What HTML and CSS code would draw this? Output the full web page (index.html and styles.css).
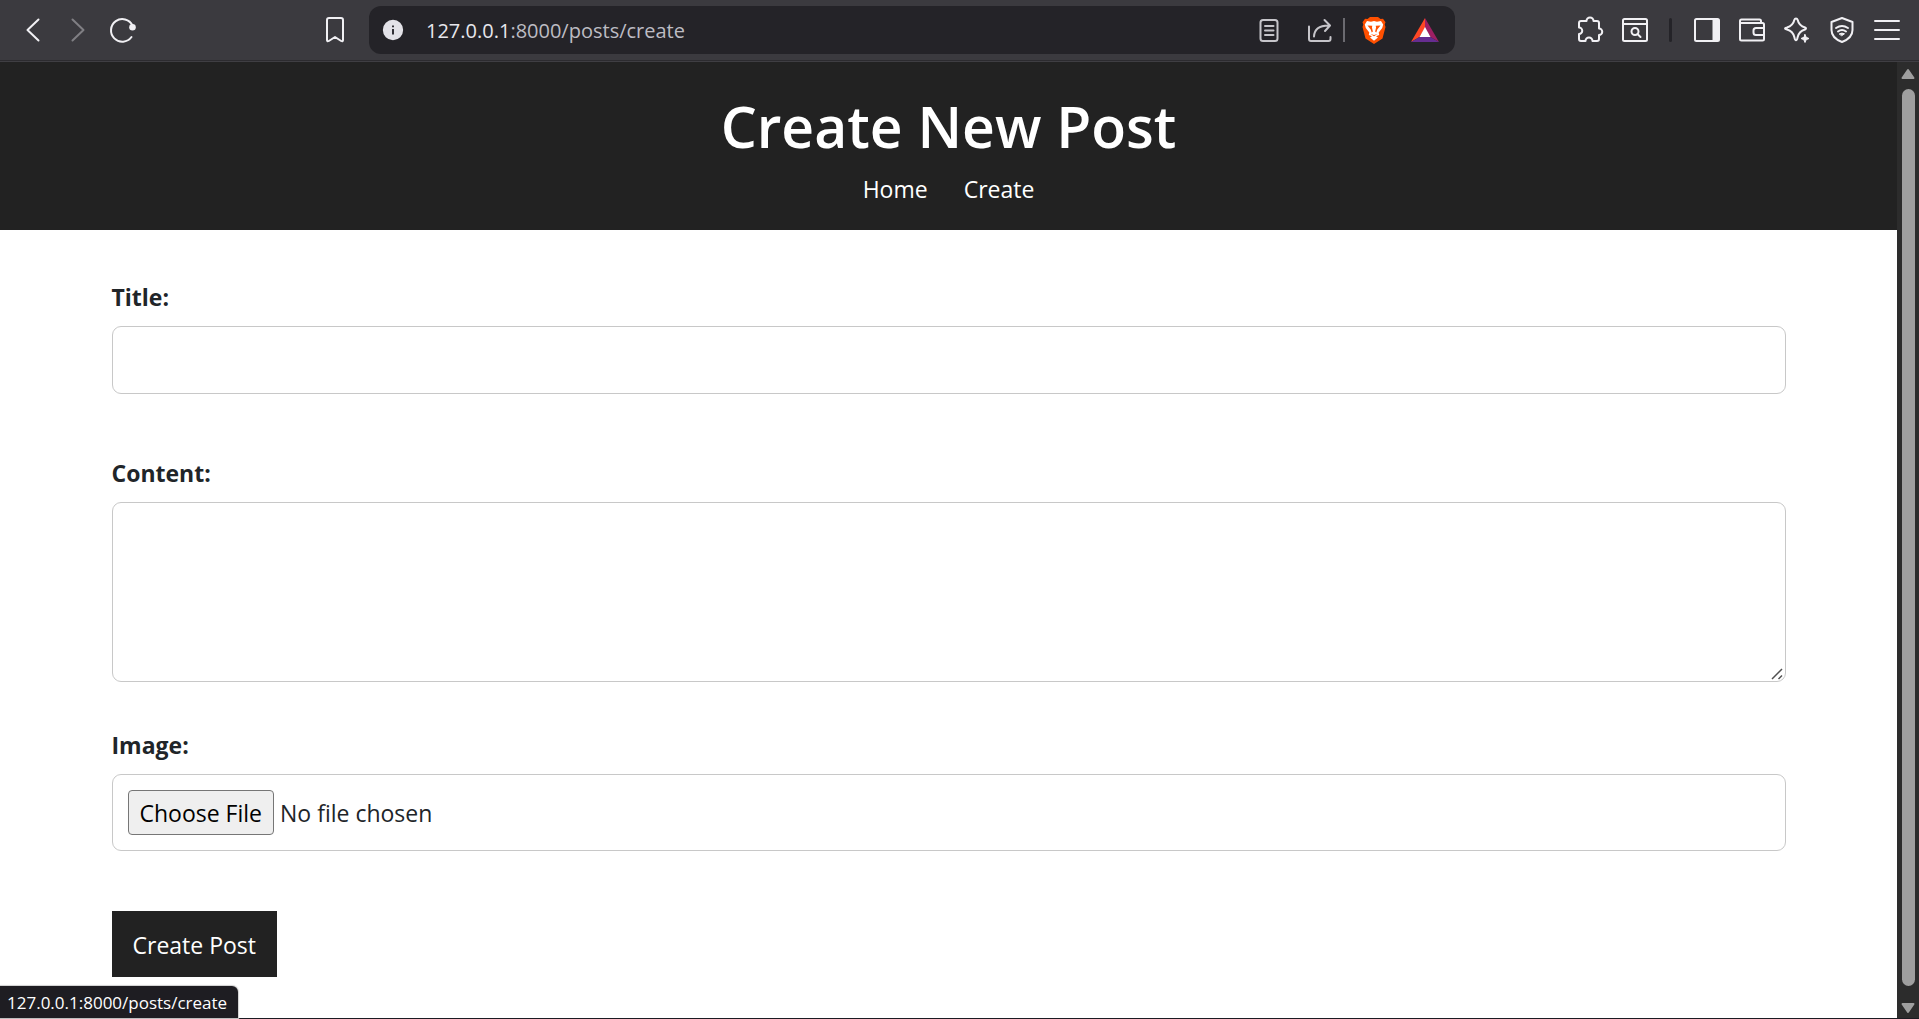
FILE: index.html
```html
<!DOCTYPE html>
<html lang="en">
<head>
<meta charset="utf-8">
<title>Create New Post</title>
<link rel="stylesheet" href="styles.css">
</head>
<body>
<div class="browser">
  <div class="toolbar">
    <div class="nav-tools">
      <button class="tool" aria-label="Back"><svg class="icon" viewBox="0 0 26 26"><path d="M18.5 2.5 7.5 13l11 10.5"/></svg></button>
      <button class="tool dim" aria-label="Forward"><svg class="icon" viewBox="0 0 26 26"><path d="M7.5 2.5 18.5 13l-11 10.5"/></svg></button>
      <button class="tool" aria-label="Reload"><svg class="icon" viewBox="0 0 26 26"><path d="M22.500 8.500A11.300 11.300 0 1 0 21.500 20"/><circle class="solid dot" cx="22.500" cy="10.300" r="3.300"/></svg></button>
      <button class="tool push" aria-label="Bookmark"><svg class="icon" viewBox="0 0 26 26"><path d="M5 3q0-2 2-2h12q2 0 2 2v20q0 2-1.800 1L13 20l-6.200 4q-1.800 1-1.800-1z"/></svg></button>
    </div>
    <div class="address">
      <button class="tool info" aria-label="Site information"><svg class="icon" viewBox="0 0 26 26"><circle class="solid" cx="13" cy="13" r="10"/><path class="mark" d="M13 12v6M13 8v2"/></svg></button>
      <span class="url"><span class="host">127.0.0.1</span>:8000/posts/create</span>
      <button class="tool soft" aria-label="Reader"><svg class="icon" viewBox="0 0 26 26"><rect x="4.500" y="3" width="17" height="21" rx="2.500"/><path d="M9 9h8.500M9 13.500h8.500M9 18h8.500"/></svg></button>
      <button class="tool soft" aria-label="Share"><svg class="icon" viewBox="0 0 26 26"><path d="M2 9.500V22q0 2 2 2h17.500q2 0 2-2v-2M7 19.500Q7.500 8.500 21.500 8.500M17.500 3 23 8.500l-5 5.500"/></svg></button>
      <span class="address-rule"></span>
      <button class="tool" aria-label="Brave Shields"><svg class="icon brand" viewBox="0 0 26 28"><path fill="#ff5000" d="M6.500 3 9 1h8l2.500 2 2.500-.2 2.500 3.500-.8 2.200.8 2.500-3 11.500-8.500 5.500L4.500 22.500 1.500 11l.8-2.500-.8-2.200L4 2.800z"/><path fill="#fff" d="m6 5 4 .7 3-.6 3 .6 4-.7 2.200 3.500-1 3.500-3.500 4.500.5 2.500-3.200 1.200 2 1.300-4 3.300L9 21.500l2-1.300L7.800 19l.5-2.500L4.800 12l-1-3.500z"/><path fill="#ff5000" d="m6.500 9.500 4.800.3-.4 1.600 1 4-1.200 1.200-1-3zM19.500 9.500l-4.800.3.4 1.600-1 4 1.200 1.200 1-3zM9.500 18l3.500 1 3.500-1-3.500 2.200z"/></svg></button>
      <button class="tool" aria-label="Brave Rewards"><svg class="icon brand" viewBox="0 0 28 26"><path fill="#ff4724" d="M14 1v10L8.500 20 0 25z"/><path fill="#9e1f63" d="M14 1v10l5.500 9 8.500 5z"/><path fill="#662d91" d="m0 25 8.500-5h11l8.500 5z"/><path fill="#fff" d="m14 10 5.500 10h-11z"/></svg></button>
    </div>
    <div class="menu-tools">
      <button class="tool" aria-label="Extensions"><svg class="icon" viewBox="0 0 26 26"><path d="M2 6q0-2 2-2h5.500a3.500 3.500 0 0 1 7 0H20q2 0 2 2v5.500a3 3 0 0 1 0 6.500v4q0 2-2 2h-4.500a3.500 3.500 0 0 0-7 0H4q-2 0-2-2v-5a3 3 0 0 0 0-6.500z"/></svg></button>
      <button class="tool" aria-label="Find in page"><svg class="icon" viewBox="0 0 26 26"><rect x="1" y="2" width="24" height="22" rx="1.500"/><path d="M1 7h24"/><circle cx="13" cy="14.500" r="3.500"/><path d="m15.500 17 3 3"/></svg></button>
      <span class="menu-rule"></span>
      <button class="tool" aria-label="Side panel"><svg class="icon" viewBox="0 0 26 26"><rect x="1" y="2" width="24" height="22" rx="1.500"/><path class="solid" d="M19.500 3H24v20h-4.500z"/></svg></button>
      <button class="tool" aria-label="Wallet"><svg class="icon" viewBox="0 0 26 26"><path d="M22 6V4q0-1.500-1.500-1.500h-18Q1 2.500 1 4v18q0 1.500 1.500 1.500h21q1.500 0 1.500-1.500V7.500Q25 6 23.500 6H1M25 11h-8q-2.500 0-2.500 2.500v2q0 2.500 2.500 2.500h8"/></svg></button>
      <button class="tool" aria-label="Assistant"><svg class="icon" viewBox="0 0 26 26"><path d="M12 1.500q1.200 0 1.600 1.300 1.400 6 7.400 7.700 2 1 0 2-6 1.700-7.400 7.700-.6 3-1.600 3t-1.600-3Q9 14.200 3 12.500q-4-1 0-2 6-1.700 7.400-7.700Q10.800 1.500 12 1.500z"/><path class="solid thin" d="m21 17.500 1.200 2.800 2.800 1.200-2.800 1.200L21 25.500l-1.200-2.800-2.800-1.200 2.800-1.200z"/></svg></button>
      <button class="tool" aria-label="VPN"><svg class="icon" viewBox="0 0 26 26"><path d="m13 1 10.500 4v8q0 8-10.500 12Q2.500 21 2.500 13V5zM7 11q6-4 12 0M9 14.500q4-3 8 0"/><path class="solid thin" d="M10.500 16.800q2.500-1.500 5 0L13 18.500z"/></svg></button>
      <button class="tool" aria-label="Menu"><svg class="icon" viewBox="0 0 26 26"><path d="M1 4h24M1 13h24M1 22h24"/></svg></button>
    </div>
  </div>

  <div class="viewport">
    <div class="page">
      <header class="banner">
        <h1 class="heading">Create New Post</h1>
        <nav class="links">
          <a class="link" href="#home">Home</a>
          <a class="link" href="#create">Create</a>
        </nav>
      </header>
      <form class="form">
        <div class="field">
          <label class="label" for="title">Title:</label>
          <input class="control" id="title" type="text">
        </div>
        <div class="field">
          <label class="label" for="content">Content:</label>
          <textarea class="control area" id="content"></textarea>
        </div>
        <div class="field">
          <label class="label" for="image">Image:</label>
          <input class="control file" id="image" type="file">
        </div>
        <button class="submit" type="submit">Create Post</button>
      </form>
    </div>
    <div class="scrollbar">
      <svg class="arrow" viewBox="0 0 14 12"><path d="M7 2 12.500 10h-11z"/></svg>
      <div class="thumb"></div>
      <svg class="arrow" viewBox="0 0 14 12"><path d="M7 10 1.500 2h11z"/></svg>
    </div>
    <div class="status">127.0.0.1:8000/posts/create</div>
  </div>
</div>
</body>
</html>
```
FILE: styles.css
```css
* { box-sizing: border-box; }

body {
  margin: 0;
  font-family: "Open Sans", "Noto Sans", sans-serif;
  font-size: 23px;
  line-height: 36px;
  color: #212529;
  background: #fff;
}

.browser {
  display: flex;
  flex-direction: column;
  height: 100vh;
}

/* Browser toolbar */
.toolbar {
  display: flex;
  align-items: center;
  height: 62px;
  padding: 0 10px 2px;
  background: #3b3a3f;
  box-shadow: inset 0 -1px #3f3e43, inset 0 -2px #2c2b2f;
}

.nav-tools {
  display: flex;
  width: 347px;
}

.push { margin-left: auto; }

.menu-tools {
  display: flex;
  align-items: center;
  margin-left: 112px;
}

.tool {
  display: flex;
  align-items: center;
  justify-content: center;
  width: 45px;
  height: 45px;
  padding: 0;
  border: 0;
  background: none;
  color: #f1f0f4;
}

.dim { color: #807f84; }
.soft { color: #c6c5ca; }

.icon {
  width: 26px;
  height: 26px;
  overflow: visible;
  fill: none;
  stroke: currentColor;
  stroke-width: 2;
  stroke-linecap: round;
  stroke-linejoin: round;
}

.icon .solid { fill: currentColor; }
.icon .dot { stroke: none; }
.icon .thin { stroke-width: 1; }
.icon .mark { stroke: #242328; stroke-linecap: butt; }
.brand { width: 28px; height: 28px; stroke: none; }

.address {
  display: flex;
  flex: 1;
  align-items: center;
  gap: 7px;
  height: 48px;
  margin-left: 12px;
  padding: 0 8px 0 2px;
  border-radius: 12px;
  background: #242328;
}

.address .tool { width: 44px; }
.info .icon { color: #e3e2e8; width: 24px; height: 24px; }

.url {
  flex: 1;
  padding: 1px 0 0 4px;
  font-size: 20px;
  color: #bdbcc3;
}

.host { color: #e8e7ed; }

.address-rule {
  width: 2px;
  height: 24px;
  margin-left: -6px;
  background: #6b6a70;
}

.menu-rule {
  width: 3px;
  height: 24px;
  margin: 0 12px;
  border-radius: 2px;
  background: #242328;
}

/* Page area */
.viewport {
  position: relative;
  display: flex;
  flex: 1;
  min-height: 0;
  border-bottom: 1px solid #1c1b22;
}

.page {
  flex: 1;
  overflow: hidden;
}

.banner {
  padding: 25px 24px 23px;
  text-align: center;
  color: #fff;
  background: #222;
}

.heading {
  margin: 0 0 6px;
  font-size: 57px;
  font-weight: 600;
  line-height: 78px;
}

.links {
  display: flex;
  justify-content: center;
  gap: 36px;
}

.link {
  color: #fff;
  text-decoration: none;
}

.form {
  max-width: 1722px;
  margin: 0 auto;
  padding: 49px 24px;
}

.field { margin-bottom: 60px; }

.field:first-child { margin-bottom: 61px; }

.label {
  display: block;
  margin-bottom: 11px;
  font-weight: 700;
}

.control {
  display: block;
  width: 100%;
  height: 68px;
  padding: 15px;
  border: 1px solid #c8c8c8;
  border-radius: 9px;
  font: inherit;
  color: inherit;
  background: #fff;
}

.area { height: 180px; }

.area::-webkit-resizer {
  background: url("data:image/svg+xml,%3Csvg xmlns='http://www.w3.org/2000/svg' viewBox='0 0 15 15'%3E%3Cpath d='M2 13 12 3M8.500 13l3.500-3.500' fill='none' stroke='%23505050' stroke-width='1.500'/%3E%3C/svg%3E") no-repeat right bottom / 15px 15px;
}

.field:has(.area) { margin-bottom: 45px; }

.file { height: 77px; }

.file::file-selector-button {
  height: 45px;
  margin-right: 6px;
  padding: 1px 11px 0;
  border: 1px solid #767676;
  border-radius: 4px;
  font: inherit;
  color: #000;
  background: #efefef;
}

.submit {
  padding: 16px 21px 14px;
  border: 0;
  font: inherit;
  color: #fff;
  background: #222;
}

.scrollbar {
  display: flex;
  flex-direction: column;
  align-items: center;
  width: 22px;
  padding: 6px 0 4px;
  background: #2c2c2c;
}

.arrow {
  width: 14px;
  height: 12px;
  fill: #9f9f9f;
  stroke: #9f9f9f;
  stroke-width: 2;
  stroke-linejoin: round;
}

.thumb {
  flex: 1;
  width: 13px;
  margin: 9px 0 16px;
  border-radius: 7px;
  background: #9f9f9f;
}

/* Link target bubble over the page corner */
.status {
  position: absolute;
  left: 0;
  bottom: 0;
  padding: 1px 11px 0 7px;
  border-top-right-radius: 6px;
  font-size: 17px;
  line-height: 31px;
  color: #fff;
  background: #1e1d22;
  box-shadow: 0 0 1px 1px #d0d0d0;
}
```
